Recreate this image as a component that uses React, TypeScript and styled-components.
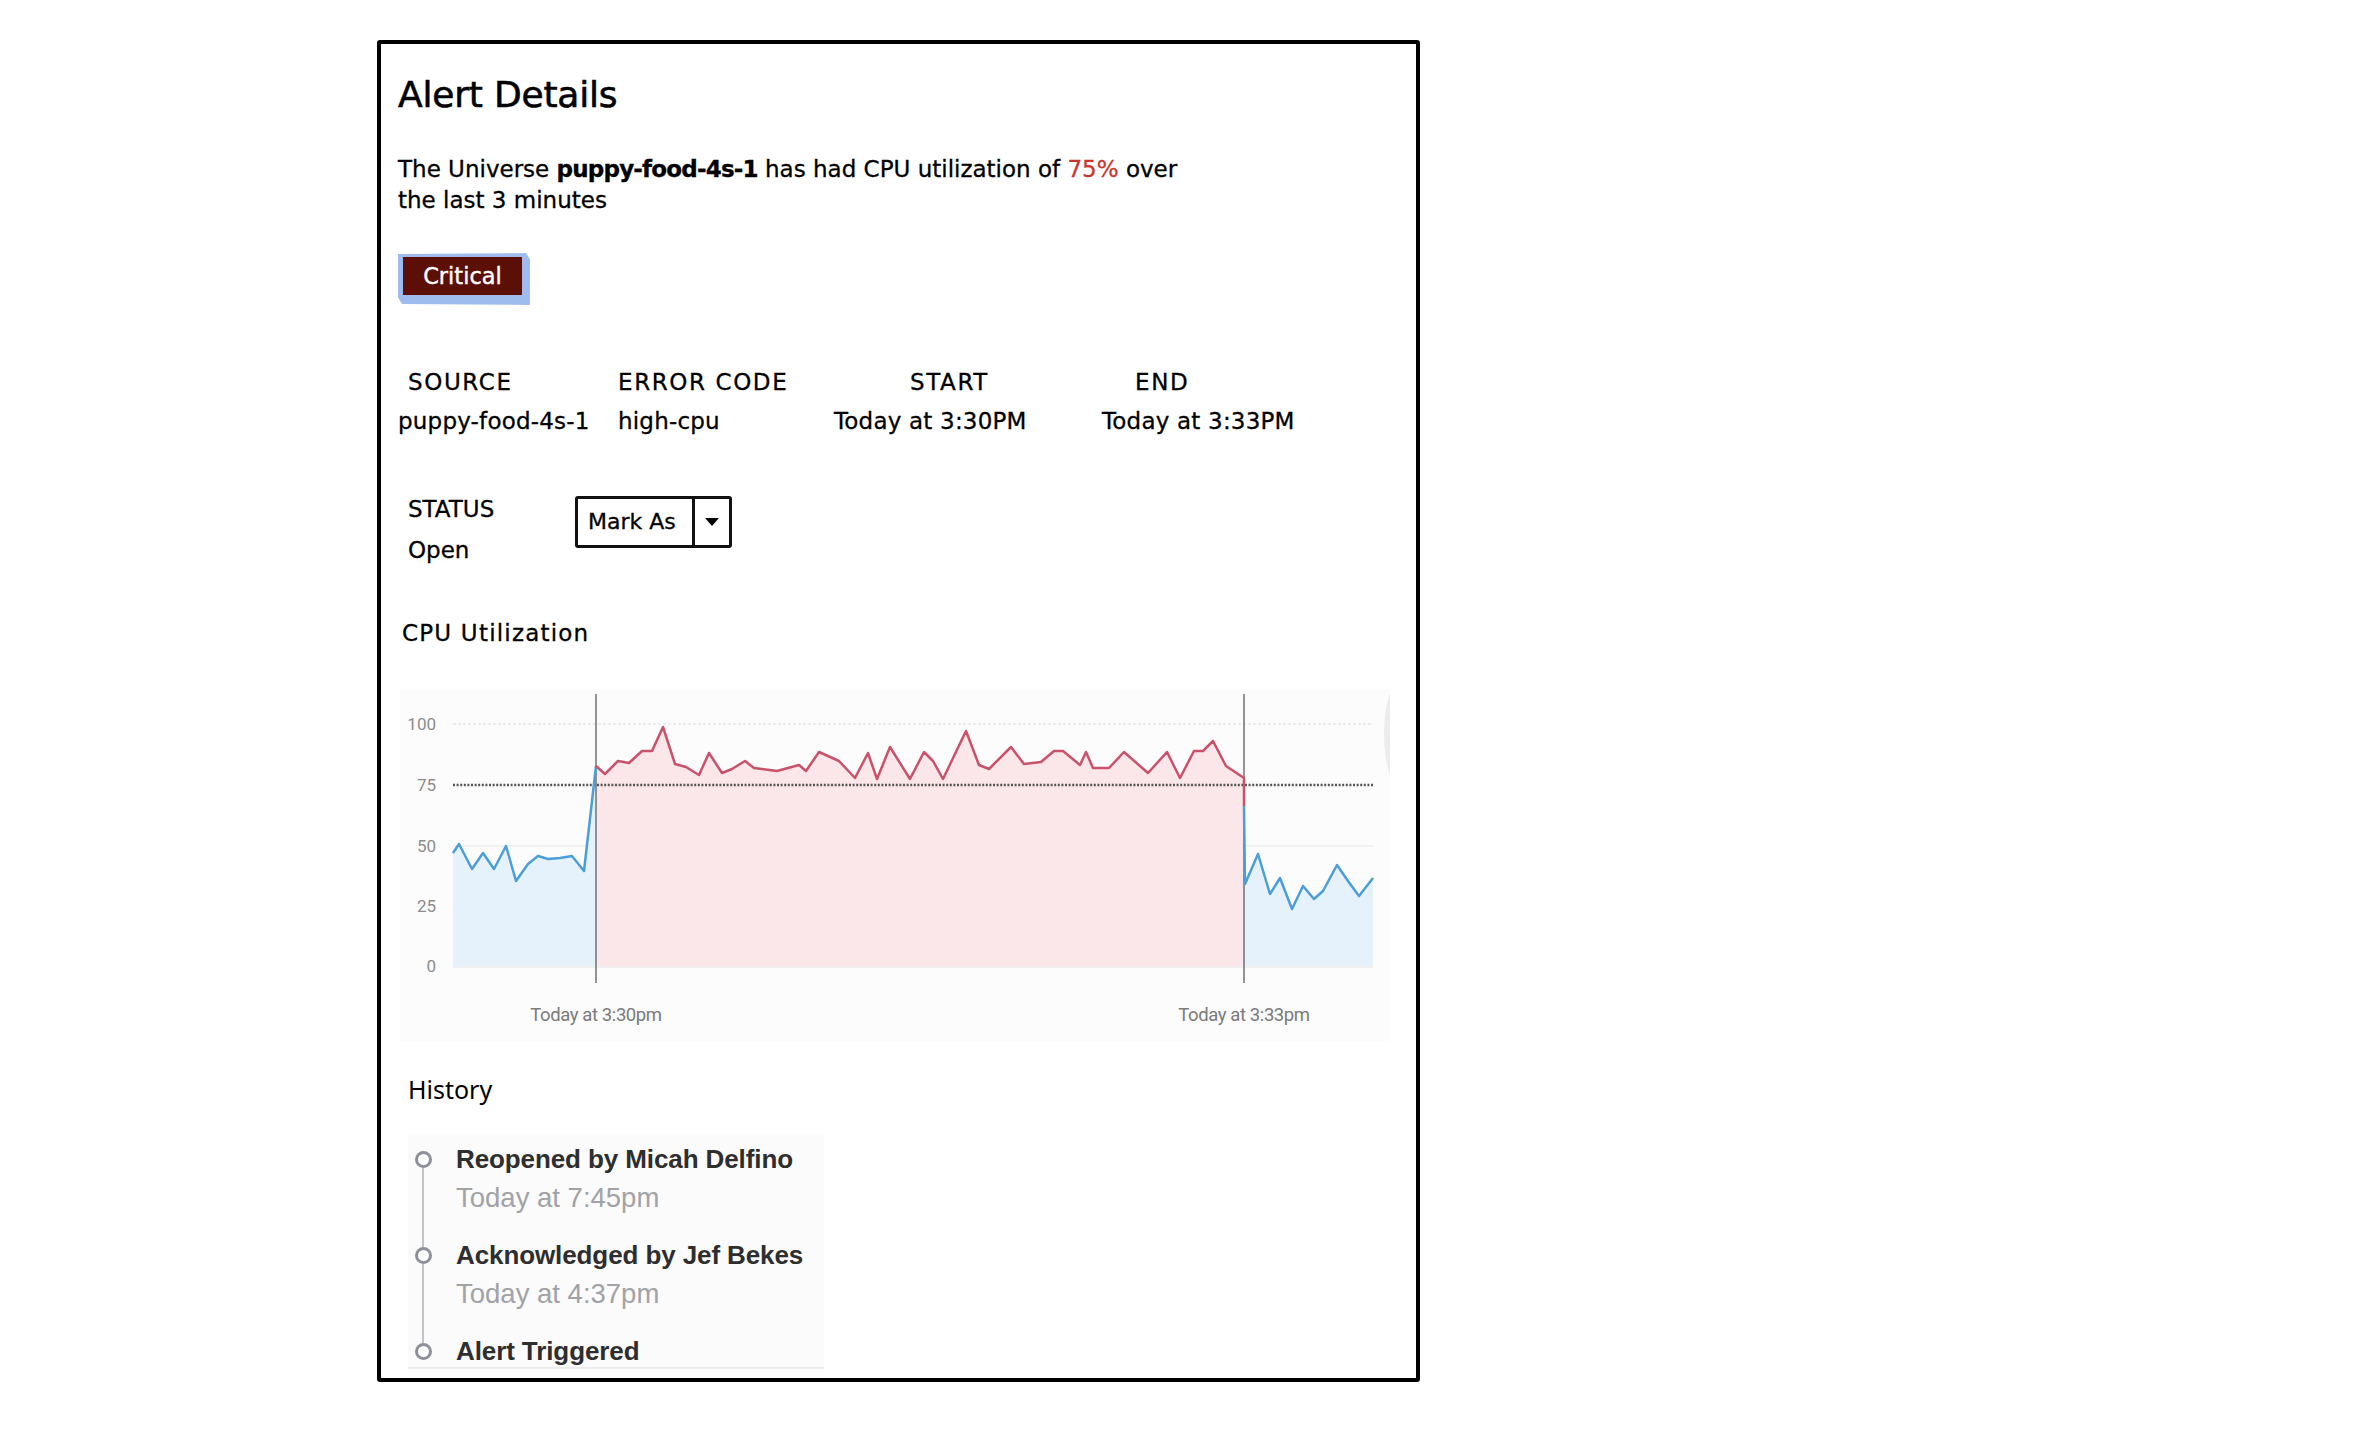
import React from "react";
import styled, { createGlobalStyle } from "styled-components";

const GlobalStyle = createGlobalStyle`
  html, body { margin: 0; padding: 0; background: #ffffff; }
  body { font-family: "DejaVu Sans", "Open Sans", sans-serif; color: #000; }
`;

const Page = styled.div`
  padding: 40px 0 0 377px;
`;

const Card = styled.section`
  width: 1043px;
  height: 1342px;
  box-sizing: border-box;
  border: 4px solid #000;
  border-radius: 3px;
  padding: 27px 17px 0;
  display: flex;
  flex-direction: column;
  align-items: flex-start;
  overflow: hidden;
`;

const Title = styled.h1`
  margin: 0;
  font-size: 36px;
  line-height: 48px;
  font-weight: 400;
  letter-spacing: -0.2px;
  -webkit-text-stroke: 0.6px #000;
`;

const Summary = styled.p`
  margin: 35px 0 0;
  font-size: 23px;
  line-height: 31px;
  font-weight: 400;
  -webkit-text-stroke: 0.3px currentColor;
`;

const Strong = styled.b`
  font-weight: 700;
  letter-spacing: -0.8px;
`;

const Percent = styled.span`
  color: #c8372d;
`;

const Highlight = styled.div`
  margin-top: 37px;
  padding: 4px 8px 10px 5px;
  background: #9ebdee;
  clip-path: polygon(0 2%, 97% 0, 100% 12%, 100% 100%, 3% 98%, 0 85%);
`;

const Badge = styled.div`
  width: 119px;
  height: 38px;
  background: #5b0f07;
  color: #fff;
  font-size: 22.5px;
  line-height: 38px;
  text-align: center;
  -webkit-text-stroke: 0.4px #fff;
`;

const MetaGrid = styled.div`
  margin-top: 59px;
  display: grid;
  grid-template-columns: 220px 216px 268px 240px;
  row-gap: 3px;
  -webkit-text-stroke: 0.3px #000;
`;

const MetaLabel = styled.div<{ $indent: number }>`
  padding-left: ${(p) => p.$indent}px;
  font-size: 23px;
  line-height: 36px;
  letter-spacing: 1.6px;
`;

const MetaValue = styled.div`
  font-size: 23px;
  line-height: 36px;
  letter-spacing: 0.2px;
`;

const StatusRow = styled.div`
  margin-top: 52px;
  display: flex;
  align-items: flex-start;
  -webkit-text-stroke: 0.3px #000;
`;

const StatusBlock = styled.div`
  width: 177px;
  box-sizing: border-box;
  padding-left: 10px;
  display: flex;
  flex-direction: column;
  gap: 5px;
`;

const StatusLine = styled.div`
  font-size: 23px;
  line-height: 36px;
`;

const MarkAs = styled.div`
  margin-top: 5px;
  display: flex;
  align-items: stretch;
  height: 52px;
  box-sizing: border-box;
  border: 3px solid #111;
  border-radius: 3px;
`;

const MarkAsLabel = styled.div`
  width: 114px;
  box-sizing: border-box;
  padding-left: 10px;
  font-size: 22px;
  line-height: 46px;
`;

const MarkAsArrow = styled.div`
  width: 34px;
  border-left: 3px solid #111;
  display: flex;
  align-items: center;
  justify-content: center;
`;

const Caret = styled.span`
  width: 0;
  height: 0;
  border-left: 7px solid transparent;
  border-right: 7px solid transparent;
  border-top: 8px solid #000;
`;

const SectionTitle = styled.h2`
  margin: 47px 0 0;
  padding-left: 4px;
  font-size: 23px;
  line-height: 36px;
  font-weight: 400;
  letter-spacing: 1.2px;
  -webkit-text-stroke: 0.3px #000;
`;

const ChartFrame = styled.div`
  margin: 38px 0 0 2px;
  width: 990px;
  height: 352px;
  background: #fcfcfc;
`;

const HistoryTitle = styled.h2`
  margin: 30px 0 0 10px;
  font-family: "Noto Sans", "Open Sans", sans-serif;
  font-size: 25px;
  line-height: 36px;
  font-weight: 400;
`;

const Timeline = styled.ul`
  margin: 28px 0 0 10px;
  padding: 5px 0 0;
  list-style: none;
  width: 416px;
  height: 234px;
  box-sizing: border-box;
  background: #fbfbfc;
  border-bottom: 2px solid #ececee;
  overflow: hidden;
  font-family: "Liberation Sans", Arial, sans-serif;
`;

const Item = styled.li`
  display: flex;
  align-items: stretch;
  height: 96px;
`;

const Marker = styled.div`
  width: 30px;
  margin-right: 18px;
  display: flex;
  flex-direction: column;
  align-items: center;
`;

const Stub = styled.div<{ $show: boolean }>`
  width: 2px;
  height: 11px;
  background: ${(p) => (p.$show ? "#c3c3c9" : "transparent")};
`;

const Ring = styled.div`
  width: 17px;
  height: 17px;
  box-sizing: border-box;
  border: 3.5px solid #8f8f98;
  border-radius: 50%;
  background: #fff;
  flex: none;
`;

const Tail = styled.div<{ $show: boolean }>`
  width: 2px;
  flex: 1;
  background: ${(p) => (p.$show ? "#c3c3c9" : "transparent")};
`;

const ItemText = styled.div`
  display: flex;
  flex-direction: column;
  gap: 1px;
`;

const ItemTitle = styled.div`
  font-size: 26px;
  line-height: 38px;
  font-weight: 700;
  color: #2e2e2e;
  letter-spacing: -0.1px;
`;

const ItemTime = styled.div`
  font-size: 27.5px;
  line-height: 38px;
  color: #a2a2a6;
`;

type P = [number, number];
const OX = 400;
const OY = 688;
const toPts = (pts: P[]) => pts.map(([x, y]) => `${x - OX},${y - OY}`).join(" ");
const BASE = 965;
const toArea = (pts: P[]) => {
  const first = pts[0];
  const last = pts[pts.length - 1];
  return toPts([[first[0], BASE], ...pts, [last[0], BASE]]);
};

const blueLeft: P[] = [
  [453, 852], [459, 843], [472, 868], [483, 852], [494, 868], [506, 845], [516, 880],
  [528, 863], [538, 855], [548, 858], [560, 857], [572, 855], [584, 870], [596, 765],
];

const red: P[] = [
  [596, 765], [605, 773], [618, 760], [629, 762], [642, 750], [652, 750], [663, 726],
  [675, 763], [686, 766], [699, 774], [709, 752], [722, 772], [732, 768], [745, 760],
  [754, 767], [777, 770], [799, 764], [806, 770], [819, 751], [839, 760], [855, 777],
  [868, 752], [877, 778], [890, 746], [910, 778], [924, 751], [933, 760], [943, 778],
  [966, 730], [979, 764], [989, 768], [1011, 746], [1024, 763], [1041, 761], [1054, 750],
  [1063, 750], [1080, 764], [1086, 751], [1093, 767], [1109, 767], [1124, 751],
  [1148, 772], [1167, 751], [1180, 777], [1194, 750], [1203, 750], [1213, 740],
  [1226, 765], [1244, 777], [1244, 805],
];

const blueRight: P[] = [
  [1244, 805], [1245, 883], [1258, 853], [1270, 893], [1280, 877], [1292, 908], [1303, 885],
  [1314, 898], [1323, 890], [1337, 864], [1348, 880], [1359, 895], [1373, 877],
];

const yTicks: [string, number][] = [
  ["100", 723],
  ["75", 784],
  ["50", 845],
  ["25", 905],
  ["0", 965],
];

const axisFont = "Roboto, 'Liberation Sans', sans-serif";

function CpuChart() {
  return (
    <svg width="990" height="352" viewBox="0 0 990 352">
      <ellipse cx="1006" cy="45" rx="22" ry="60" fill="#ececec" />
      <line x1={453 - OX} y1={723 - OY} x2={1373 - OX} y2={723 - OY} stroke="#ececec" strokeWidth="2" strokeDasharray="3 2" />
      <line x1={453 - OX} y1={845 - OY} x2={1373 - OX} y2={845 - OY} stroke="#efefef" strokeWidth="1.5" />
      <line x1={453 - OX} y1={BASE - OY + 1} x2={1373 - OX} y2={BASE - OY + 1} stroke="#f0f0f0" strokeWidth="2" />
      <polygon points={toArea(blueLeft)} fill="#e5f1fb" />
      <polygon points={toArea(red)} fill="#fbe6e9" />
      <polygon points={toArea(blueRight)} fill="#e5f1fb" />
      <line x1={453 - OX} y1={784 - OY} x2={1373 - OX} y2={784 - OY} stroke="#555" strokeWidth="2.5" strokeDasharray="2 1.6" />
      <line x1={596 - OX} y1={5} x2={596 - OX} y2={294} stroke="#707070" strokeWidth="1.5" />
      <line x1={1244 - OX} y1={5} x2={1244 - OX} y2={294} stroke="#707070" strokeWidth="1.5" />
      <polyline points={toPts(blueLeft)} fill="none" stroke="#4b9ed6" strokeWidth="2.5" strokeLinejoin="round" />
      <polyline points={toPts(red)} fill="none" stroke="#c9526a" strokeWidth="2.5" strokeLinejoin="round" />
      <polyline points={toPts(blueRight)} fill="none" stroke="#4b9ed6" strokeWidth="2.5" strokeLinejoin="round" />
      {yTicks.map(([t, y]) => (
        <text key={t} x={36} y={y - OY + 6} textAnchor="end" fontFamily={axisFont} fontSize="17" fill="#8c8c8c">
          {t}
        </text>
      ))}
      <text x={196} y={332} textAnchor="middle" fontFamily={axisFont} fontSize="18.5" fill="#7a7a7a" letterSpacing="-0.4">
        Today at 3:30pm
      </text>
      <text x={844} y={332} textAnchor="middle" fontFamily={axisFont} fontSize="18.5" fill="#7a7a7a" letterSpacing="-0.4">
        Today at 3:33pm
      </text>
    </svg>
  );
}

const meta = [
  { label: "SOURCE", value: "puppy-food-4s-1", indent: 10 },
  { label: "ERROR CODE", value: "high-cpu", indent: 0 },
  { label: "START", value: "Today at 3:30PM", indent: 76 },
  { label: "END", value: "Today at 3:33PM", indent: 33 },
];

const history = [
  { title: "Reopened by Micah Delfino", time: "Today at 7:45pm" },
  { title: "Acknowledged by Jef Bekes", time: "Today at 4:37pm" },
  { title: "Alert Triggered", time: "" },
];

export default function App() {
  return (
    <>
      <GlobalStyle />
      <Page>
        <Card>
          <Title>Alert Details</Title>
          <Summary>
            The Universe <Strong>puppy-food-4s-1</Strong> has had CPU utilization of{" "}
            <Percent>75%</Percent> over
            <br />
            the last 3 minutes
          </Summary>
          <Highlight>
            <Badge>Critical</Badge>
          </Highlight>
          <MetaGrid>
            {meta.map((m) => (
              <MetaLabel key={m.label} $indent={m.indent}>
                {m.label}
              </MetaLabel>
            ))}
            {meta.map((m) => (
              <MetaValue key={m.value}>{m.value}</MetaValue>
            ))}
          </MetaGrid>
          <StatusRow>
            <StatusBlock>
              <StatusLine>STATUS</StatusLine>
              <StatusLine>Open</StatusLine>
            </StatusBlock>
            <MarkAs>
              <MarkAsLabel>Mark As</MarkAsLabel>
              <MarkAsArrow>
                <Caret />
              </MarkAsArrow>
            </MarkAs>
          </StatusRow>
          <SectionTitle>CPU Utilization</SectionTitle>
          <ChartFrame>
            <CpuChart />
          </ChartFrame>
          <HistoryTitle>History</HistoryTitle>
          <Timeline>
            {history.map((h, i) => (
              <Item key={h.title}>
                <Marker>
                  <Stub $show={i > 0} />
                  <Ring />
                  <Tail $show={i < history.length - 1} />
                </Marker>
                <ItemText>
                  <ItemTitle>{h.title}</ItemTitle>
                  {h.time && <ItemTime>{h.time}</ItemTime>}
                </ItemText>
              </Item>
            ))}
          </Timeline>
        </Card>
      </Page>
    </>
  );
}
